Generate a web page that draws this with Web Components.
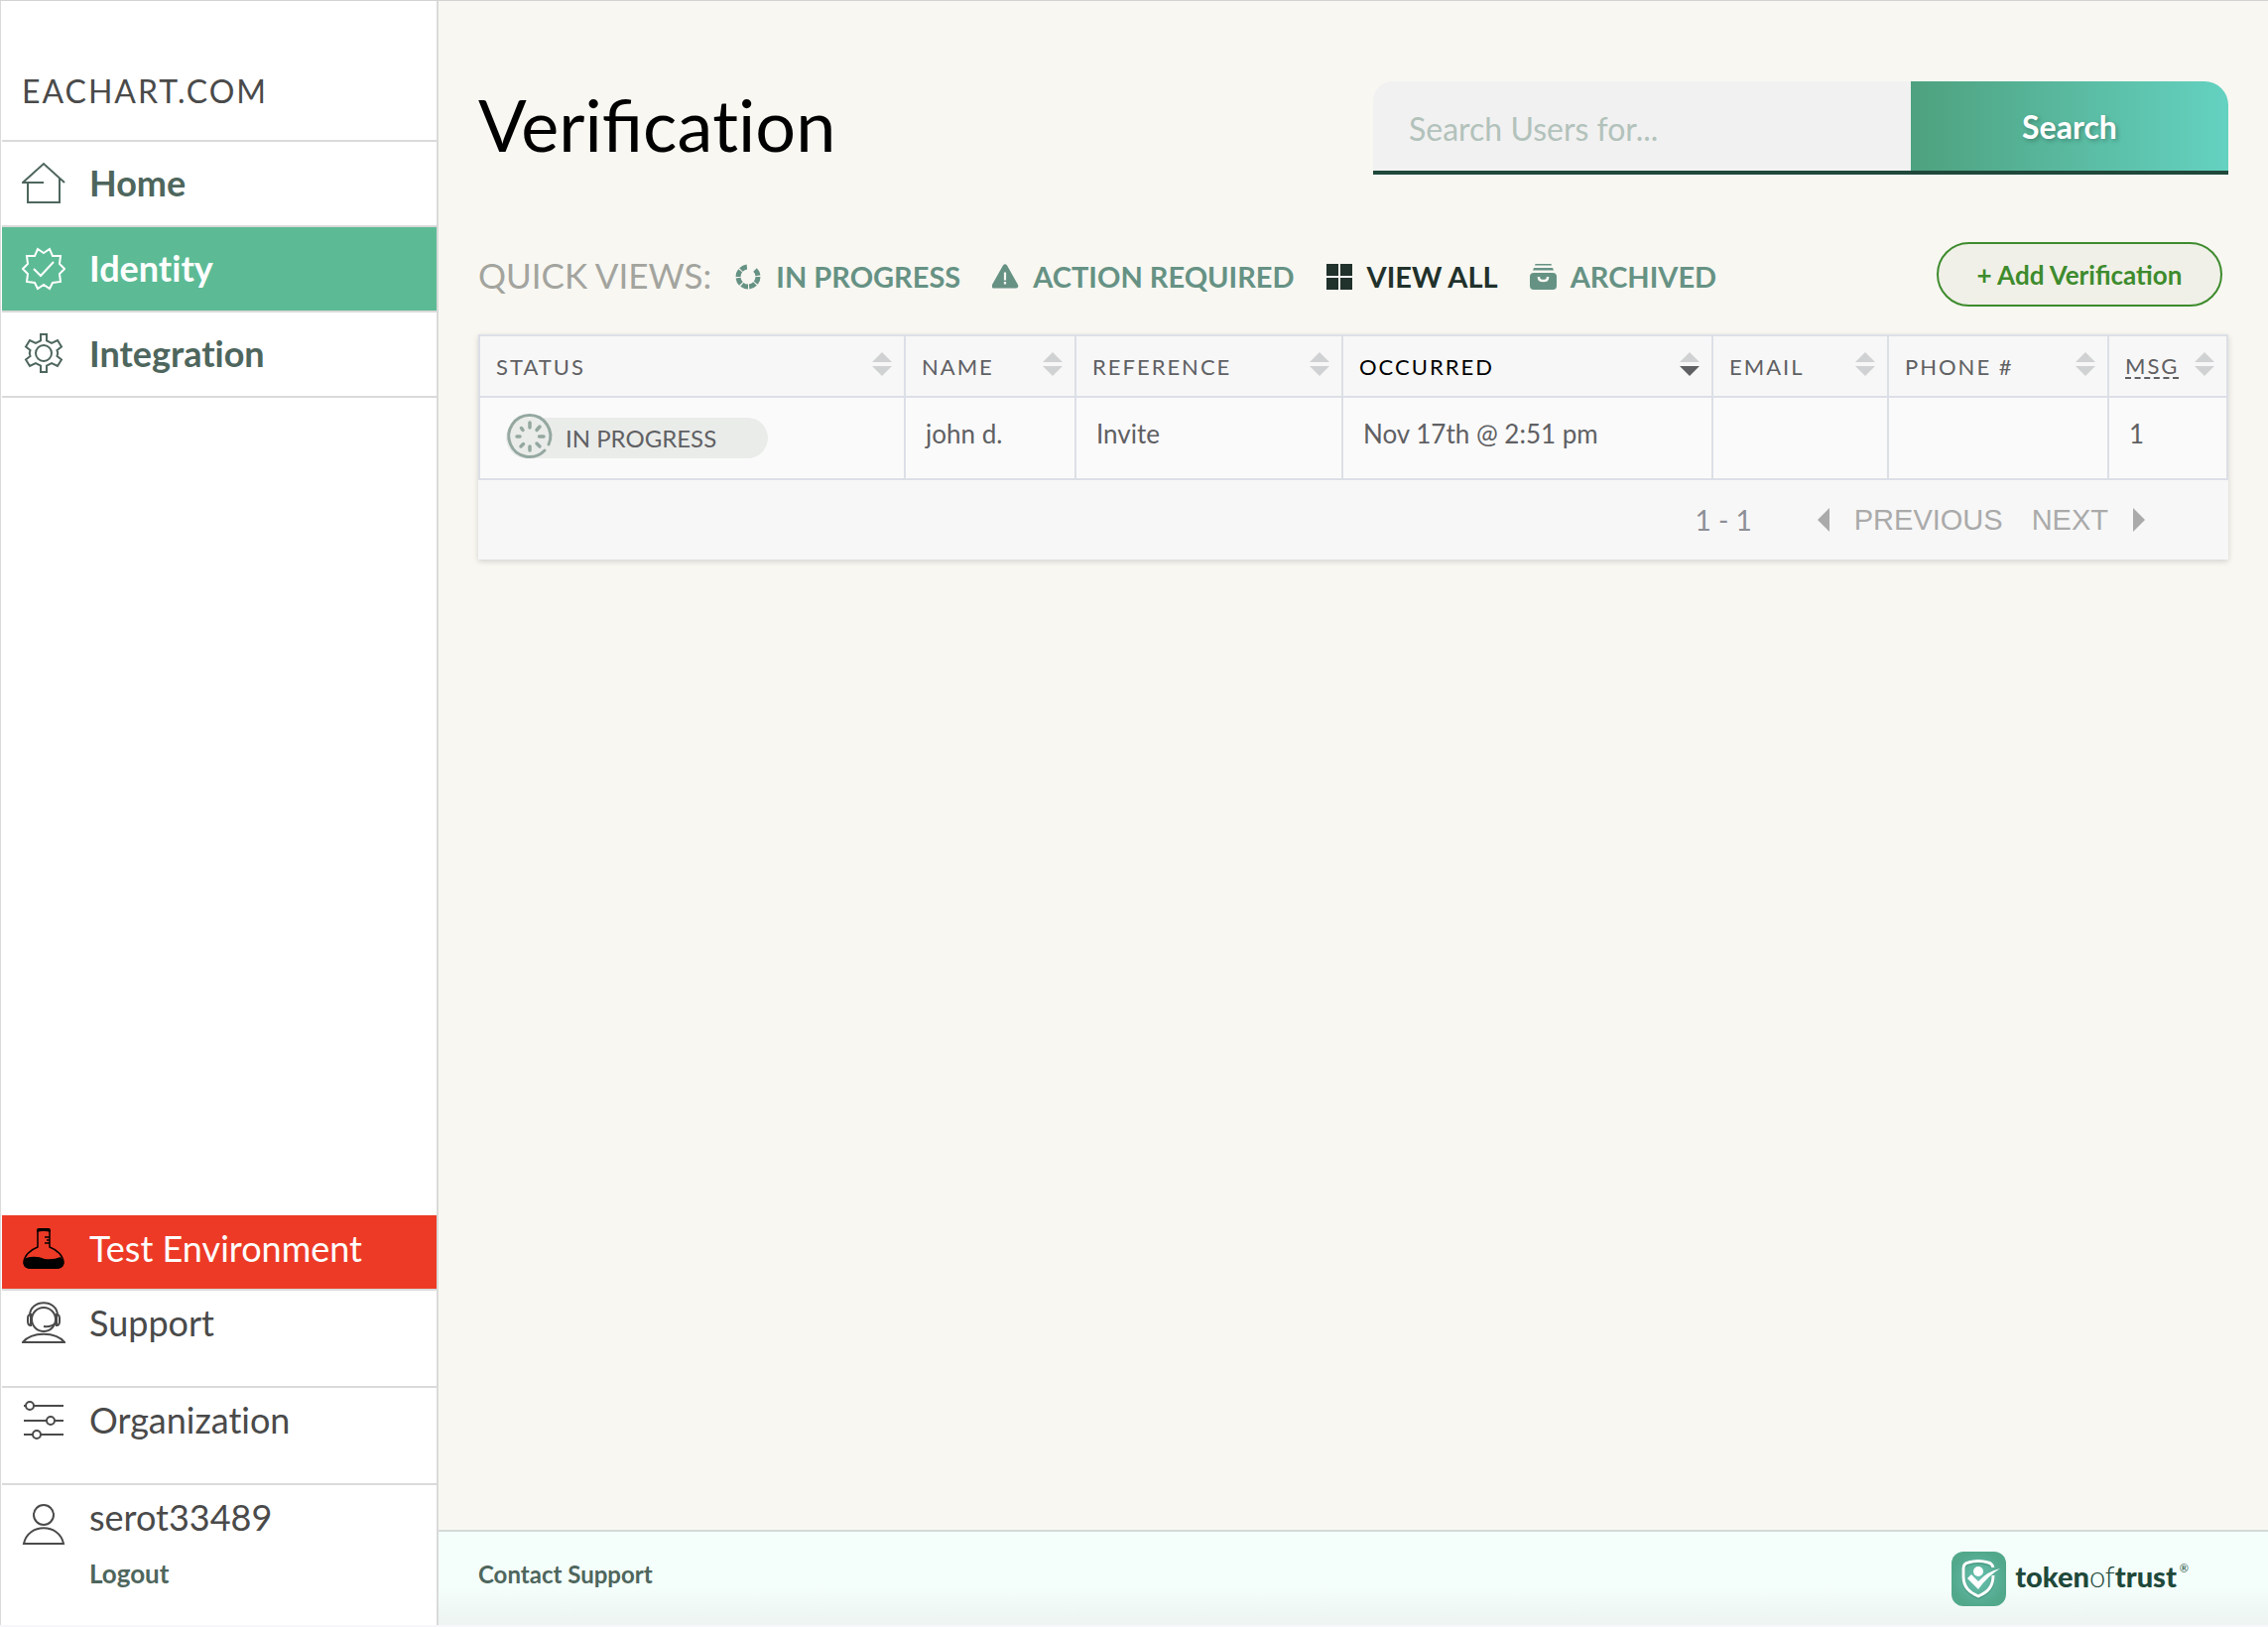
<!DOCTYPE html>
<html lang="en">
<head>
<meta charset="utf-8">
<title>Verification</title>
<style>
  html, body { margin: 0; min-height: 100%; }
  body { font-family: Lato, "Liberation Sans", sans-serif; background: #f8f7f2; color: #4a4a4a; }
</style>
</head>
<body>
<tot-app></tot-app>
<script>
const icons = {
  home: '<g fill="none" stroke="currentColor" stroke-width="2"><path d="M22 21H1L22 2L43 21"/><path d="M6 21V41H38V17"/></g>',
  badge: '<path fill="none" stroke="currentColor" stroke-width="2" d="M22 6L28 2L31 9L39 9L38 17L43 22L38 27L39 35L31 36L28 42L22 38L16 42L13 36L5 35L6 27L1 22L6 17L5 9L13 9L16 2ZM12 22L19 29L32 15"/>',
  gear: '<g fill="none" stroke="currentColor" stroke-width="2"><circle cx="22" cy="21" r="8"/><path d="M19 2H25V8.500L30 11L36 8L40 14.500L35.500 18Q37 21 35.500 24L40 27.500L36 34L30 31L25 33.500V40H19V33.500L14 31L8 34L4 27.500L8.500 24Q7 21 8.500 18L4 14.500L8 8L14 11L19 8.500Z"/></g>',
  flask: '<path fill="none" stroke="#000" stroke-width="1.500" d="M16 3V20C8 23 2 29 2 36Q3 41 9 41H35Q41 41 42 36C42 29 36 23 28 20V3"/><path d="M15 3Q15 1 17 1H27Q29 1 29 3V5Q22 3 15 5ZM4 31Q14 28 23 32Q32 33 39 30Q43 34 42 38Q40 42 34 42H10Q3 42 2 38Q1 35 4 31Z"/><path stroke="#000" stroke-width="1.500" d="M23 10H28M25 13H28M23 16H28"/>',
  support: '<g fill="none" stroke="currentColor" stroke-width="2"><circle cx="22" cy="18" r="12"/><path d="M8 14C8 -3 36 -3 36 14M9 13Q6 13 6 17V20Q6 24 9 24ZM35 13Q38 13 38 17V20Q38 24 35 24ZM22 25Q30 26 35 21M1 41H43C34 30 10 30 1 41Z"/></g>',
  sliders: '<g fill="#fff" stroke="currentColor" stroke-width="2"><path d="M2 7H42M2 22H42M2 36H42"/><circle cx="8" cy="7" r="4"/><circle cx="29" cy="22" r="4"/><circle cx="15" cy="36" r="4"/></g>',
  user: '<g fill="none" stroke="currentColor" stroke-width="2"><circle cx="22" cy="14" r="10"/><path d="M2 43H42C38 22 6 22 2 43Z"/></g>'
};
const svg = (name) => `<svg width="44" height="44" viewBox="0 0 44 44" aria-hidden="true">${icons[name]}</svg>`;

const define = (tag, html) => customElements.define(tag, class extends HTMLElement {
  constructor() {
    super();
    const t = document.createElement('template');
    t.innerHTML = typeof html === 'function' ? html(this) : html;
    this.attachShadow({ mode: 'open' }).append(t.content.cloneNode(true));
  }
});

define('tot-nav-item', (el) => `
<style>
  :host { display: block; border-bottom: 2px solid #dadada; color: #4e665d; font-weight: 700; font-variant-ligatures: none; }
  a { display: flex; gap: 24px; align-items: flex-start; box-sizing: border-box; height: 84px; padding: 20px; color: inherit; text-decoration: none; font-size: 36px; line-height: 42px; }
  svg { flex: none; }
  :host([active]) { background: #5cbb95; color: #fff; }
  :host([minor]) { color: #4a4a4a; font-weight: 400; }
  :host([minor]) a { height: 96px; padding-top: 11px; }
  :host([alert]) { background: #ed3a26; color: #fff; }
  :host([alert]) a { height: 74px; padding-top: 12px; }
</style>
<a href="#">${svg(el.getAttribute('icon'))}<span><slot></slot></span></a>`);

define('tot-account', `
<style>
  :host { display: flex; gap: 24px; padding: 11px 20px 0; height: 130px; }
  svg { flex: none; margin-top: 5px; }
  div { display: flex; flex-direction: column; gap: 20px; font-size: 36px; line-height: 42px; }
  a { color: #4e665d; font-size: 26px; line-height: 32px; font-weight: 700; text-decoration: none; }
</style>
${svg('user')}<div><span><slot></slot></span><a href="#">Logout</a></div>`);

define('tot-sidebar', `
<style>
  :host { display: flex; flex-direction: column; box-sizing: border-box; background: #fff; border-right: 2px solid #dadada; padding-left: 1px; border-left: 1px solid #dadada; }
  header { box-sizing: border-box; height: 142px; padding: 71px 20px 0; border-bottom: 2px solid #dadada; font-size: 32px; line-height: 40px; letter-spacing: 2px; }
  nav { flex: 1; }
</style>
<header>EACHART.COM</header>
<nav>
  <tot-nav-item icon="home">Home</tot-nav-item>
  <tot-nav-item icon="badge" active>Identity</tot-nav-item>
  <tot-nav-item icon="gear">Integration</tot-nav-item>
</nav>
<tot-nav-item icon="flask" minor alert>Test Environment</tot-nav-item>
<tot-nav-item icon="support" minor>Support</tot-nav-item>
<tot-nav-item icon="sliders" minor>Organization</tot-nav-item>
<tot-account>serot33489</tot-account>`);

define('tot-search', `
<style>
  :host { display: block; flex: 0 1 862px; }
  form { display: flex; height: 90px; border-bottom: 4px solid #20483a; }
  input, button { font-family: inherit; font-size: 32px; border: 0; margin: 0; outline: 0; }
  input { flex: 1; min-width: 0; padding: 4px 36px 0; background: #f1f1f1; border-radius: 20px 0 0 0; color: #20483a; }
  input::placeholder { color: #b2c2bb; opacity: 1; }
  button { width: 320px; padding: 0; font-weight: 700; color: #fff; text-shadow: 2px 2px 4px rgba(0,0,0,.25); background: linear-gradient(90deg, #4ea17e, #64d2c1); border-radius: 0 24px 0 0; }
</style>
<form><input type="text" aria-label="Search users" placeholder="Search Users for..."><button type="button">Search</button></form>`);

const viewIcons = {
  progress: '<circle cx="13" cy="13" r="10" fill="none" stroke="currentColor" stroke-width="5" pathLength="80" stroke-dasharray="8.500 1.500" transform="rotate(-90 13 13)"/><path fill="#f8f7f2" d="M13 13V-1H25Z"/>',
  warning: '<path fill="currentColor" d="M11 1.500Q13 -1 15 1.500L26 21Q27 24.500 24 24.500H2Q-1 24.500 0 21Z"/><path stroke="#f8f7f2" stroke-width="2.200" d="M13 8.500V16.500M13 18V20.500"/>',
  grid: '<path fill="currentColor" d="M0 0H12V12H0ZM14 0H26V12H14ZM0 14H12V26H0ZM14 14H26V26H14Z"/>',
  archive: '<path fill="currentColor" d="M5.500 0H21.500L22 1.500H5ZM4 4H23L24 6.500H3Z"/><rect y="9" width="27" height="17" rx="4" fill="currentColor"/><path fill="none" stroke="#f8f7f2" stroke-width="2.500" d="M9 13V14Q9 17 13.500 17Q18 17 18 14V13"/>'
};
define('tot-view-link', (el) => `
<style>
  :host { display: block; }
  a { display: flex; align-items: center; gap: 14px; color: #669284; font-size: 29px; line-height: 36px; font-weight: 700; text-decoration: none; }
  :host([active]) a { color: #21312b; }
  svg { overflow: hidden; }
</style>
<a href="#"><svg width="27" height="26" viewBox="0 0 27 26" aria-hidden="true">${viewIcons[el.getAttribute('icon')]}</svg><span><slot></slot></span></a>`);

define('tot-quick-views', `
<style>
  :host { display: flex; align-items: center; justify-content: space-between; margin-top: 68px; padding-right: 6px; height: 65px; }
  div { display: flex; align-items: center; }
  .links { gap: 32px; margin-left: 24px; padding-top: 4px; }
  .label { color: #a3a49e; font-size: 35px; line-height: 44px; }
  button { box-sizing: border-box; width: 288px; height: 65px; border: 2px solid #3e8b2d; border-radius: 33px; background: #f0f0e8; color: #3e8b2d; font: 700 26px/32px Lato, sans-serif; }
</style>
<div><span class="label">QUICK VIEWS:</span>
<div class="links">
  <tot-view-link icon="progress">IN PROGRESS</tot-view-link>
  <tot-view-link icon="warning">ACTION REQUIRED</tot-view-link>
  <tot-view-link icon="grid" active>VIEW ALL</tot-view-link>
  <tot-view-link icon="archive">ARCHIVED</tot-view-link>
</div></div>
<button type="button">+ Add Verification</button>`);

define('tot-sort', `
<style>
  :host { display: block; height: 24px; }
  svg { display: block; fill: #d0d1d2; }
  :host([desc]) .down { fill: #5f6063; }
</style>
<svg width="20" height="24" viewBox="0 0 20 24" aria-hidden="true"><path d="M10 0L20 10H0Z"/><path class="down" d="M0 14H20L10 24Z"/></svg>`);

define('tot-status', `
<style>
  :host { display: inline-flex; align-items: center; box-sizing: border-box; width: 264px; height: 41px; margin-left: 6px; border-radius: 21px; background: #eaecea; font-size: 24px; line-height: 30px; gap: 13px; }
  svg { flex: none; margin: -4px 0 0 1px; overflow: visible; }
</style>
<svg width="46" height="46" viewBox="0 0 46 46" fill="none" stroke="#94a8a0" stroke-linecap="round" aria-hidden="true"><path stroke-width="3" d="M42 31A21 21 0 1 0 38 37"/><path stroke-width="3.500" d="M23 9V14M33 13L30 16.500M37 23H32.500M33 33L30 30M23 37V33M14 33L16.500 30.500M10 23H13M14.500 14.500L16 16.500"/></svg>
<span><slot></slot></span>`);

const cols = [['STATUS', ''], ['NAME', 172], ['REFERENCE', 269], ['OCCURRED', 373], ['EMAIL', 177], ['PHONE #', 222], ['MSG', 120]];
define('tot-table', `
<style>
  :host { display: block; margin-top: 28px; background: #f7f7f7; box-shadow: 0 2px 6px rgba(0,0,0,.15); }
  table { width: 100%; table-layout: fixed; border-collapse: collapse; color: #5f6063; }
  th, td { border: 2px solid #dcdfe6; text-align: left; box-sizing: border-box; }
  th { height: 62px; padding: 0 12px 0 16px; font-weight: 400; font-size: 22px; line-height: 28px; letter-spacing: 2px; }
  th div { display: flex; align-items: center; justify-content: space-between; }
  th span { padding-top: 2px; }
  th tot-sort { margin-top: -4px; }
  th.sorted { color: #000; }
  abbr { text-decoration: none; border-bottom: 2px dashed #5f6063; display: block; line-height: 22px; }
  td { height: 83px; padding: 0 20px; font-size: 26px; line-height: 32px; background: #fafafa; vertical-align: middle; }
  td p { margin: -10px 0 0; }
  td tot-status { vertical-align: middle; }
  footer { display: flex; align-items: center; justify-content: flex-end; height: 80px; padding-right: 84px; font-size: 28px; line-height: 34px; color: #8d8f96; }
  footer button { display: flex; align-items: center; gap: 25px; border: 0; padding: 0; background: none; color: #aaa; font: 29px/34px "Liberation Sans", Arial, sans-serif; }
  .prev { margin: 0 29px 0 66px; }
</style>
<table>
  <colgroup>${cols.map(c => `<col${c[1] ? ` style="width:${c[1]}px"` : ''}>`).join('')}</colgroup>
  <thead><tr>${cols.map(([n]) => `<th scope="col"${n === 'OCCURRED' ? ' class="sorted"' : ''}><div><span>${n === 'MSG' ? '<abbr title="Messages">MSG</abbr>' : n}</span><tot-sort${n === 'OCCURRED' ? ' desc' : ''}></tot-sort></div></th>`).join('')}</tr></thead>
  <tbody><tr><td><tot-status>IN PROGRESS</tot-status></td><td><p>john d.</p></td><td><p>Invite</p></td><td><p>Nov 17th @ 2:51 pm</p></td><td></td><td></td><td><p>1</p></td></tr></tbody>
</table>
<footer><span>1 - 1</span>
<button class="prev" type="button"><svg width="12" height="24" viewBox="0 0 12 24" fill="#aaa" aria-hidden="true"><path d="M12 0V24L0 12Z"/></svg>PREVIOUS</button>
<button type="button">NEXT<svg width="12" height="24" viewBox="0 0 12 24" fill="#aaa" aria-hidden="true"><path d="M0 0V24L12 12Z"/></svg></button></footer>`);

define('tot-logo', `
<style>
  :host { display: flex; align-items: center; gap: 9px; color: #20483a; font-size: 29px; line-height: 36px; font-weight: 900; }
  i { font-style: normal; font-weight: 300; }
  div { display: flex; align-items: flex-start; padding-bottom: 4px; }
  small { font-size: 11px; line-height: 20px; font-weight: 400; margin-left: 3px; }
</style>
<svg width="55" height="55" viewBox="0 0 55 55" aria-hidden="true">
  <defs><radialGradient id="g"><stop offset="0" stop-color="#66bfae"/><stop offset="1" stop-color="#52a88b"/></radialGradient></defs>
  <rect width="55" height="55" rx="12" fill="url(#g)"/>
  <path fill="none" stroke="#2f7a65" stroke-opacity=".4" stroke-width="4" d="M42 16Q41 13 37 12Q27 9 17 12Q12 13 12 17V25C12 37 18 42 27 46C36 42 42 37 42 25"/>
  <path fill="none" stroke="#fff" stroke-width="3" d="M42 16Q41 12 37 11Q27 8 17 11Q12 12 12 17V25C12 36 18 41 27 45C36 41 42 36 42 24"/>
  <circle cx="27" cy="20" r="5" fill="#fff"/><path fill="#fff" d="M16 27L20 23L27 30Q36 20 49 17Q36 25 27 38Z"/>
</svg>
<div><span>token<i>of</i>trust</span><small>®</small></div>`);

define('tot-footer', `
<style>
  :host { display: flex; align-items: center; justify-content: space-between; box-sizing: border-box; height: 96px; padding: 0 80px 0 40px; border-top: 2px solid #d3dbd8; background: linear-gradient(#f4fefa 60%, #edf4f2); }
  a { color: #4e665d; font-size: 24px; line-height: 32px; font-weight: 700; text-decoration: none; margin-top: -8px; }
</style>
<a href="#">Contact Support</a><tot-logo></tot-logo>`);

define('tot-app', `
<style>
  :host { display: grid; grid-template-columns: 442px minmax(0, 1fr); box-sizing: border-box; min-height: 100vh; border-top: 1px solid #d3d3d3; border-bottom: 2px solid #f6f6fb; }
  .page { display: flex; flex-direction: column; }
  main { flex: 1; padding: 81px 40px 0; }
  .top { display: flex; justify-content: space-between; height: 94px; }
  h1 { margin: 0; font-size: 72px; line-height: 86px; font-weight: 400; color: #000; }
  h1 span { font-variant-ligatures: none; }
</style>
<tot-sidebar></tot-sidebar>
<div class="page">
  <main>
    <div class="top"><h1>Verifica<span>tion</span></h1><tot-search></tot-search></div>
    <tot-quick-views></tot-quick-views>
    <tot-table></tot-table>
  </main>
  <tot-footer></tot-footer>
</div>`);
</script>
</body>
</html>
